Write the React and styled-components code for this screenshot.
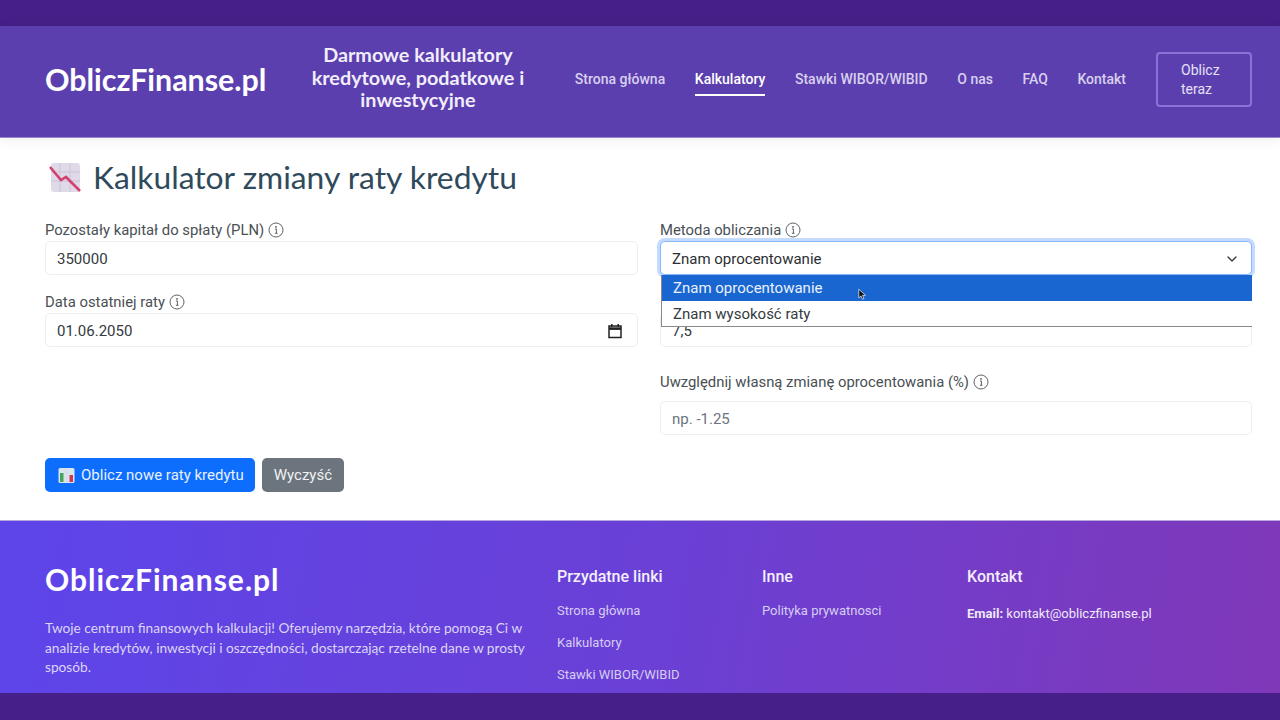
import React from "react";
import styled, { createGlobalStyle } from "styled-components";
import { ChevronDown } from "lucide-react";

const GlobalStyle = createGlobalStyle`
  html, body {
    margin: 0;
    padding: 0;
    background: #fff;
    font-family: "Roboto", "Liberation Sans", sans-serif;
    overflow: hidden;
  }
  * { box-sizing: border-box; }
`;

const InfoIcon = () => (
  <InfoSvg viewBox="0 0 16 16" fill="none">
    <circle cx="8" cy="8" r="7" stroke="#5f6368" strokeWidth="1" />
    <circle cx="8" cy="4.9" r="0.9" fill="#5f6368" />
    <path d="M6.9 7h1.5v4.2M6.9 11.3h2.6" stroke="#5f6368" strokeWidth="1" />
  </InfoSvg>
);

const FallingChart = () => (
  <svg width="32" height="32" viewBox="0 0 32 32">
    <rect x="2" y="2" width="29" height="29" rx="3" fill="#dfd9e8" />
    <path d="M2 11h29M2 20h29M11 2v29M21 2v29" stroke="#cbc4d8" strokeWidth="1" />
    <path d="M1 6l11 13 5-3 14 14" fill="none" stroke="#d2416f" strokeWidth="2.6" />
  </svg>
);

const BarsIcon = () => (
  <svg width="17" height="17" viewBox="0 0 17 17">
    <rect x="0.5" y="1" width="16" height="15" rx="1.5" fill="#d8e4ee" />
    <rect x="2" y="6" width="3.5" height="9" fill="#46a35a" />
    <rect x="6.8" y="2.5" width="3.5" height="12.5" fill="#d8dfe8" />
    <rect x="11.5" y="8" width="3.5" height="7" fill="#d2354e" />
  </svg>
);

const navItems = ["Strona główna", "Kalkulatory", "Stawki WIBOR/WIBID", "O nas", "FAQ", "Kontakt"];
const usefulLinks = ["Strona główna", "Kalkulatory", "Stawki WIBOR/WIBID"];

export default function App() {
  return (
    <Page>
      <GlobalStyle />
      <Band $height={26} />
      <Header>
        <Logo>ObliczFinanse.pl</Logo>
        <Tagline>Darmowe kalkulatory kredytowe, podatkowe i inwestycyjne</Tagline>
        <Nav>
          {navItems.map((item) => (
            <NavLink key={item} $active={item === "Kalkulatory"}>{item}</NavLink>
          ))}
        </Nav>
        <CtaButton>Oblicz teraz</CtaButton>
      </Header>

      <Main>
        <Title>
          <FallingChart />
          Kalkulator zmiany raty kredytu
        </Title>
        <FormGrid>
          <Column>
            <Field>
              <Label>Pozostały kapitał do spłaty (PLN) <InfoIcon /></Label>
              <InputBox>350000</InputBox>
            </Field>
            <Field>
              <Label>Data ostatniej raty <InfoIcon /></Label>
              <InputBox>
                01.06.2050
                <svg width="16" height="16" viewBox="0 0 16 16" fill="none">
                  <path d="M2 3h12v11.5H2z" stroke="#222" strokeWidth="1.5" />
                  <path d="M2 5.6h12" stroke="#222" strokeWidth="2.6" />
                  <path d="M4.8 1v3M11.2 1v3" stroke="#222" strokeWidth="1.5" />
                </svg>
              </InputBox>
            </Field>
          </Column>
          <Column>
            <Field>
              <Label>Metoda obliczania <InfoIcon /></Label>
              <SelectWrap>
                <SelectBox>
                  Znam oprocentowanie
                  <ChevronDown size={16} strokeWidth={2} color="#343a40" />
                </SelectBox>
                <Dropdown>
                  <Option $selected>
                    Znam oprocentowanie
                    <Cursor viewBox="0 0 12 16">
                      <path d="M1 1v11.5l3-2.6 2 4.4 2-.9-2-4.3h4z" fill="#111" stroke="#fff" strokeWidth="0.9" />
                    </Cursor>
                  </Option>
                  <Option>Znam wysokość raty</Option>
                </Dropdown>
              </SelectWrap>
            </Field>
            <Field>
              <Label />
              <InputBox>7,5</InputBox>
            </Field>
            <Field $spaced>
              <Label $spaced>Uwzględnij własną zmianę oprocentowania (%) <InfoIcon /></Label>
              <InputBox $placeholder>np. -1.25</InputBox>
            </Field>
          </Column>
        </FormGrid>
        <Buttons>
          <PrimaryButton><BarsIcon /> Oblicz nowe raty kredytu</PrimaryButton>
          <SecondaryButton>Wyczyść</SecondaryButton>
        </Buttons>
      </Main>

      <Footer>
        <FooterAbout>
          <FooterLogo>ObliczFinanse.pl</FooterLogo>
          <FooterText>
            Twoje centrum finansowych kalkulacji! Oferujemy narzędzia, które pomogą Ci w analizie kredytów, inwestycji i oszczędności, dostarczając rzetelne dane w prosty sposób.
          </FooterText>
        </FooterAbout>
        <FooterColumn>
          <FooterHeading>Przydatne linki</FooterHeading>
          {usefulLinks.map((link) => <FooterLink key={link}>{link}</FooterLink>)}
        </FooterColumn>
        <FooterColumn>
          <FooterHeading>Inne</FooterHeading>
          <FooterLink>Polityka prywatnosci</FooterLink>
        </FooterColumn>
        <FooterColumn>
          <FooterHeading>Kontakt</FooterHeading>
          <FooterContact><b>Email:</b> kontakt@obliczfinanse.pl</FooterContact>
        </FooterColumn>
      </Footer>
      <Band $height={27} />
    </Page>
  );
}

const Page = styled.div`
  display: flex;
  flex-direction: column;
  width: 1280px;
  height: 720px;
  overflow: hidden;
  background: #fff;
`;

const Band = styled.div`
  flex: 0 0 ${(p) => p.$height}px;
  background: #462088;
`;

const Header = styled.header`
  flex: 0 0 112px;
  display: flex;
  align-items: center;
  padding: 0 28px 4px 45px;
  background: #5b3fae;
  border-bottom: 1px solid #9a86cf;
  box-shadow: 0 2px 12px rgba(0, 0, 0, 0.07);
  position: relative;
  color: #fff;
`;

const Logo = styled.div`
  width: 221px;
  margin-bottom: 2px;
  font-family: "Lato", sans-serif;
  font-size: 30.4px;
  font-weight: 700;
  white-space: nowrap;
`;

const Tagline = styled.div`
  width: 232px;
  margin-left: 36px;
  padding-bottom: 5px;
  font-family: "Lato", sans-serif;
  font-size: 19.8px;
  font-weight: 700;
  line-height: 22.5px;
  text-align: center;
  color: #f1edfa;
`;

const Nav = styled.nav`
  display: flex;
  gap: 29.6px;
  margin-left: 41px;
`;

const NavLink = styled.a`
  padding: 6px 0 5px;
  font-size: 14px;
  font-weight: 500;
  line-height: 20px;
  white-space: nowrap;
  color: ${(p) => (p.$active ? "#fff" : "#d8d0ee")};
  border-bottom: 2px solid ${(p) => (p.$active ? "#fff" : "transparent")};
`;

const CtaButton = styled.button`
  width: 96px;
  height: 55px;
  margin-left: 30px;
  padding: 0 23px;
  font-family: inherit;
  font-size: 14px;
  font-weight: 400;
  line-height: 19px;
  text-align: left;
  color: #e6e0f5;
  background: transparent;
  border: 2px solid #8b72d6;
  border-radius: 4px;
`;

const Main = styled.main`
  flex: 1;
  padding: 21px 28px 0 45px;
  min-height: 0;
`;

const Title = styled.h1`
  display: flex;
  align-items: center;
  gap: 12px;
  height: 36px;
  margin: 0 0 0 4px;
  font-family: "Lato", sans-serif;
  font-size: 31.8px;
  font-weight: 400;
  color: #2f4a5c;
`;

const FormGrid = styled.div`
  display: grid;
  grid-template-columns: 593px 592px;
  gap: 22px;
  margin-top: 24px;
`;

const Column = styled.div`
  display: flex;
  flex-direction: column;
  gap: 16px;
`;

const Field = styled.div`
  display: flex;
  flex-direction: column;
  gap: 2px;
  margin-top: ${(p) => (p.$spaced ? "8px" : "0")};
`;

const Label = styled.label`
  display: flex;
  align-items: center;
  gap: 4px;
  height: 20px;
  margin-bottom: ${(p) => (p.$spaced ? "8px" : "0")};
  padding-top: 1px;
  font-size: 14.85px;
  line-height: 20px;
  color: #4a4f54;
`;

const InfoSvg = styled.svg`
  width: 16px;
  height: 16px;
`;

const InputBox = styled.div`
  display: flex;
  align-items: center;
  justify-content: space-between;
  height: 34px;
  padding: 1px 14px 0 11px;
  font-size: 15px;
  color: ${(p) => (p.$placeholder ? "#6c757d" : "#343a40")};
  background: #fff;
  border: 1px solid #eceef0;
  border-radius: 5px;
`;

const SelectWrap = styled.div`
  position: relative;
`;

const SelectBox = styled(InputBox)`
  padding-right: 11px;
  border-color: #86b7fe;
  box-shadow: 0 0 0 3px rgba(13, 110, 253, 0.25);
  color: #2b2f33;
`;

const Dropdown = styled.ul`
  position: absolute;
  top: 34px;
  left: 1px;
  right: 0;
  z-index: 3;
  margin: 0;
  padding: 0;
  list-style: none;
  background: #fff;
  border-left: 1px solid #8a8a8a;
  border-bottom: 1px solid #8a8a8a;
`;

const Option = styled.li`
  position: relative;
  height: 25.5px;
  padding-left: 11px;
  font-size: 15px;
  line-height: 26.5px;
  color: ${(p) => (p.$selected ? "#eaf2ff" : "#343a40")};
  background: ${(p) => (p.$selected ? "#1a66d0" : "#fff")};
`;

const Cursor = styled.svg`
  position: absolute;
  left: 196px;
  top: 13px;
  width: 9px;
  height: 13px;
`;

const Buttons = styled.div`
  display: flex;
  gap: 7px;
  margin-top: 23px;
`;

const PrimaryButton = styled.button`
  display: flex;
  align-items: center;
  gap: 6px;
  height: 34px;
  padding: 0 11px 0 13px;
  font-family: inherit;
  font-size: 15px;
  color: #e8f1ff;
  background: #0d6efd;
  border: none;
  border-radius: 5px;
`;

const SecondaryButton = styled.button`
  height: 34px;
  padding: 0 12px;
  font-family: inherit;
  font-size: 15px;
  color: #f1f2f3;
  background: #6c757d;
  border: none;
  border-radius: 5px;
`;

const Footer = styled.footer`
  flex: 0 0 173px;
  display: flex;
  padding: 47px 0 0 45px;
  overflow: hidden;
  background: linear-gradient(100deg, #5d45ea 0%, #6a40d6 50%, #7f38b8 100%);
  border-top: 1px solid #b7a8dd;
  color: #fff;
`;

const FooterAbout = styled.div`
  width: 512px;
`;

const FooterLogo = styled.div`
  margin-top: -4px;
  font-family: "Lato", sans-serif;
  font-size: 30px;
  font-weight: 700;
  line-height: 30px;
  letter-spacing: 1px;
`;

const FooterText = styled.p`
  width: 490px;
  margin: 24px 0 0;
  font-family: "Lato", sans-serif;
  font-size: 13.7px;
  line-height: 19.5px;
  color: #dcd6f7;
`;

const FooterColumn = styled.div`
  width: 205px;
  flex-shrink: 0;
`;

const FooterHeading = styled.div`
  margin-bottom: 15px;
  font-size: 16px;
  font-weight: 500;
  line-height: 18px;
  color: #f3effc;
`;

const FooterLink = styled.div`
  height: 32px;
  font-size: 13px;
  line-height: 20px;
  color: #d6cdf2;
`;

const FooterContact = styled.div`
  margin-top: 18px;
  font-size: 13px;
  line-height: 20px;
  white-space: nowrap;
  color: #efeafb;
`;
